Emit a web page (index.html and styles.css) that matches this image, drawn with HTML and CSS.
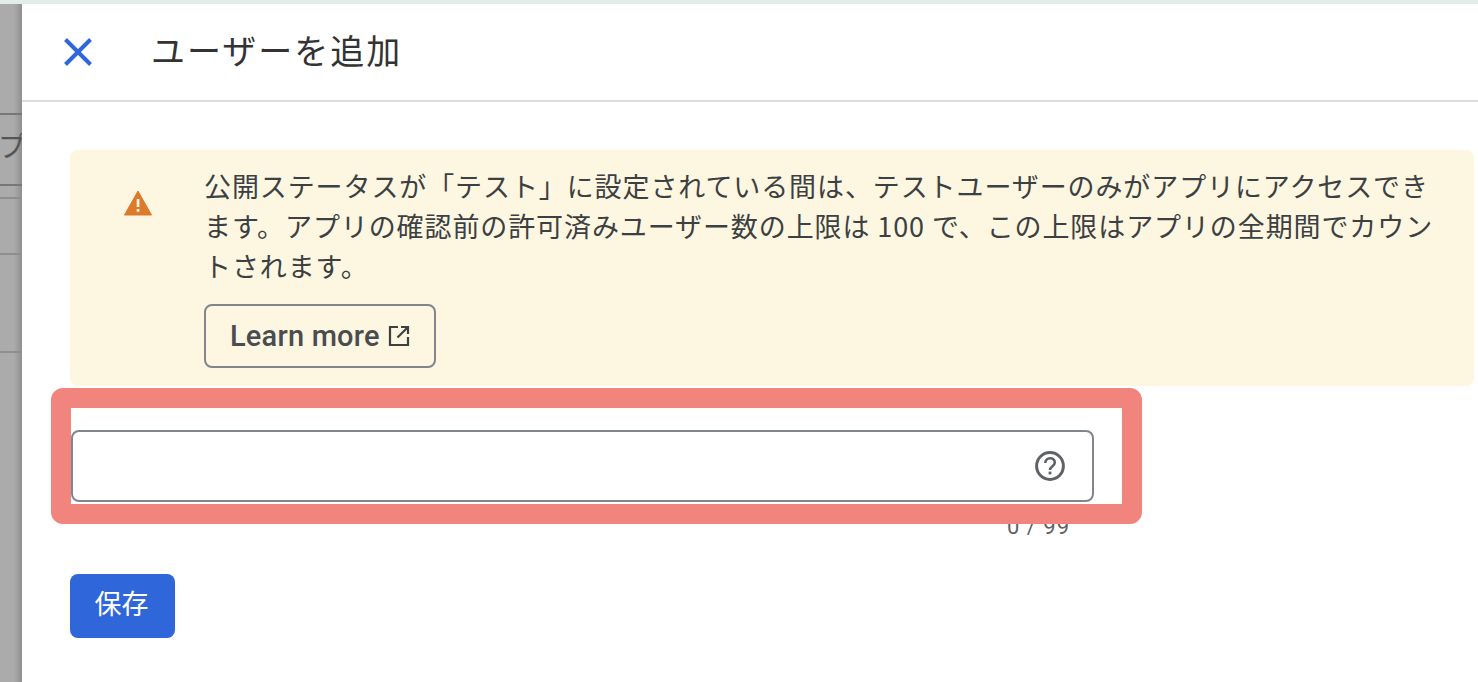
FILE: index.html
```html
<!DOCTYPE html>
<html lang="ja">
<head>
    <meta charset="UTF-8">
    <meta name="viewport" content="width=device-width, initial-scale=1.0">
    <title>ユーザーを追加</title>
    <link rel="stylesheet" href="styles.css">
</head>
<body>
    <div class="top-strip"></div>
    <div class="page">
        <div class="behind">
            <div class="behind-row row-a"></div>
            <div class="behind-row row-b"><span class="behind-text">プ</span></div>
            <div class="behind-row row-c"></div>
            <div class="behind-row row-d"></div>
            <div class="behind-row row-e"></div>
        </div>
        <div class="panel">
            <header class="panel-header">
                <svg class="close-icon" viewBox="0 0 28 28" width="28" height="28">
                    <path d="M1.5 1.5 L26.5 26.5 M26.5 1.5 L1.5 26.5" fill="none" stroke="#2f66d9" stroke-width="4"/>
                </svg>
                <h1 class="panel-title">ユーザーを追加</h1>
            </header>
            <div class="panel-body">
                <div class="notice">
                    <svg class="warn-icon" viewBox="0 0 28 26" width="28" height="26">
                        <path d="M14 1 L27.5 25 L0.5 25 Z" fill="#dd7a2b" stroke="#dd7a2b" stroke-width="1" stroke-linejoin="round"/>
                        <rect x="12.7" y="9" width="2.7" height="8" fill="#fdf7e1"/>
                        <rect x="12.7" y="19" width="2.7" height="2.7" fill="#fdf7e1"/>
                    </svg>
                    <div class="notice-content">
                        <p class="notice-text">公開ステータスが「テスト」に設定されている間は、テストユーザーのみがアプリにアクセスできます。アプリの確認前の許可済みユーザー数の上限は 100 で、この上限はアプリの全期間でカウントされます。</p>
                        <a class="learn-btn">Learn more
                            <svg viewBox="0 0 22 22" width="22" height="22">
                                <path d="M10 2 H2 V20 H20 V12 M13 2 H20 V9 M20 2 L9.5 12.5" fill="none" stroke="#3c4043" stroke-width="2.2"/>
                            </svg>
                        </a>
                    </div>
                </div>
                <div class="field">
                    <div class="field-input">
                        <svg class="help-icon" viewBox="0 0 30 30" width="30" height="30">
                            <circle cx="15" cy="15" r="13.4" fill="none" stroke="#5f6368" stroke-width="3"/>
                            <path d="M10.3 12 C10.3 5.8 19.8 5.8 19.8 11.6 C19.8 15.2 15 15.2 15 19" fill="none" stroke="#5f6368" stroke-width="2.6"/>
                            <rect x="13.6" y="20.6" width="2.8" height="2.8" fill="#5f6368"/>
                        </svg>
                    </div>
                    <div class="field-count">0 / 99</div>
                    <div class="highlight"></div>
                </div>
                <button class="save-btn">保存</button>
            </div>
        </div>
    </div>
</body>
</html>
```

FILE: styles.css
```css
html, body {
    margin: 0;
    height: 100%;
    overflow: hidden;
    background: white;
    font-family: "Noto Sans CJK JP", "Noto Sans", sans-serif;
}

.top-strip {
    height: 4px;
    background: #e2edeb;
}

.page {
    display: flex;
    height: 678px;
}

/* page dimmed behind the side panel */
.behind {
    width: 22px;
    flex-shrink: 0;
    background: linear-gradient(to right, #ababab 0, #ababab 14px, #8f8f8f 22px);
}

.behind-row {
    border-bottom: 2px solid #777;
    box-sizing: border-box;
    overflow: hidden;
}

.row-a { height: 111px; }
.row-b { height: 71px; padding-top: 10px; text-indent: -2px; color: #555; font-size: 28px; line-height: 40px; white-space: nowrap; }
.row-c { height: 13px; border-color: #8f8f8f; }
.row-d { height: 56px; border-color: #8f8f8f; }
.row-e { height: 98px; border-color: #8f8f8f; }

.panel {
    flex: 1;
    min-width: 0;
}

.panel-header {
    display: flex;
    align-items: center;
    height: 96px;
    padding-left: 42px;
    border-bottom: 2px solid #dadce0;
}

.close-icon {
    margin-right: 59px;
}

.panel-title {
    margin: 0 0 6px;
    font-size: 34px;
    font-weight: 400;
    letter-spacing: 2px;
    color: #333;
}

.panel-body {
    padding: 48px 4px 0 48px;
}

.notice {
    display: flex;
    height: 236px;
    box-sizing: border-box;
    padding: 16px 0 0 54px;
    background: #fdf7e1;
    border-radius: 8px;
}

.warn-icon {
    flex-shrink: 0;
    margin: 24px 52px 0 0;
}

.notice-content {
    width: 1240px;
}

.notice-text {
    margin: 0;
    font-size: 27px;
    line-height: 40px;
    letter-spacing: 0.9px;
    color: #3c4043;
}

.learn-btn {
    display: inline-flex;
    align-items: center;
    gap: 8px;
    box-sizing: border-box;
    width: 232px;
    height: 64px;
    margin-top: 18px;
    padding-left: 24px;
    border: 2px solid #80868b;
    border-radius: 8px;
    font-family: Roboto, sans-serif;
    font-size: 29px;
    font-weight: 500;
    letter-spacing: 0.2px;
    color: #4a4d50;
}

.field {
    position: relative;
    width: 1023px;
    margin: 44px 0 0 1px;
}

.field-input {
    display: flex;
    align-items: center;
    justify-content: flex-end;
    box-sizing: border-box;
    height: 72px;
    padding-right: 27px;
    border: 2px solid #80868b;
    border-radius: 8px;
}

.field-count {
    margin-top: 12px;
    padding-right: 24px;
    text-align: right;
    font-family: Roboto, sans-serif;
    font-size: 22px;
    line-height: 26px;
    letter-spacing: 1px;
    color: #5f6368;
}

/* red annotation box drawn on the screenshot */
.highlight {
    position: absolute;
    left: -20px;
    top: -42px;
    width: 1051px;
    height: 96px;
    border: 20px solid #f1847d;
    border-radius: 12px;
}

.save-btn {
    display: block;
    width: 105px;
    height: 64px;
    margin-top: 34px;
    padding: 0 2px 8px 0;
    border: none;
    border-radius: 8px;
    background: #2f66d9;
    font-family: inherit;
    font-size: 27px;
    color: white;
}
```
